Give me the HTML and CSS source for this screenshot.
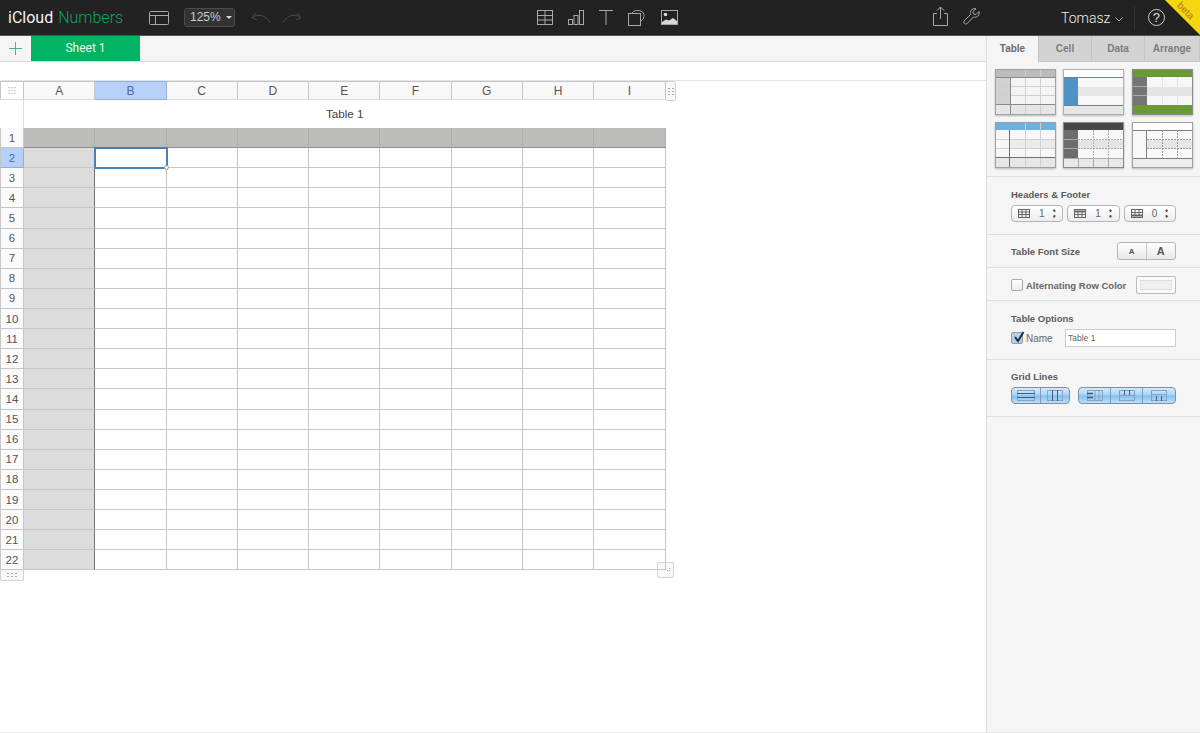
FILE: index.html
```html
<!DOCTYPE html>
<html>
<head>
	<title>iCloud Numbers</title>
	<link rel="stylesheet" href="styles.css">
</head>
<body>
	<div class="topbar">
		<div class="logo">iCloud <span class="logo-app">Numbers</span></div>
		<svg class="ico ico-layout" width="20" height="16" viewBox="0 0 20 16"><rect x="0.5" y="1.5" width="19" height="13" rx="1"/><path d="M0.5 5.5H19.5M6.5 5.5V14.5"/></svg>
		<div class="zoom-btn">125% <span class="caret"></span></div>
		<svg class="ico ico-dim ico-undo" width="20" height="12" viewBox="0 0 20 12"><path d="M5 1L1 5.5L6 8M1.5 5.5C6 2 14 2 19 10.5"/></svg>
		<svg class="ico ico-dim ico-redo" width="20" height="12" viewBox="0 0 20 12"><path d="M15 1L19 5.5L14 8M18.5 5.5C14 2 6 2 1 10.5"/></svg>

		<svg class="ico ico-table" width="16" height="15" viewBox="0 0 16 15"><rect x="0.5" y="0.5" width="15" height="14"/><path d="M0.5 5.5H15.5M0.5 10H15.5M8 0.5V14.5"/></svg>
		<svg class="ico ico-chart" width="16" height="15" viewBox="0 0 16 15"><rect x="0.5" y="9.5" width="4" height="5"/><rect x="6" y="5.5" width="4" height="9"/><rect x="11.5" y="0.5" width="4" height="14"/></svg>
		<svg class="ico ico-text" width="14" height="15" viewBox="0 0 14 15"><path d="M0 0.5H14M7 0.5V15"/></svg>
		<svg class="ico ico-shape" width="17" height="16" viewBox="0 0 17 16"><rect x="0.5" y="3.5" width="12" height="12"/><path d="M4 3.5C5 0 11 -0.5 14.500 2C17 4.500 16.500 9.500 12.500 11"/></svg>
		<svg class="ico ico-media" width="17" height="15" viewBox="0 0 17 15"><rect x="0.5" y="0.5" width="16" height="14"/><circle cx="4.500" cy="4.500" r="1.800" class="fill"/><path class="fill" d="M1 14V12L5 9.500L8 10.500L12 8L16 11V14Z"/></svg>

		<svg class="ico ico-share" width="15" height="20" viewBox="0 0 15 20"><path d="M4 7.500H0.500V19.500H14.500V7.500H11M7.500 13V1M4 4.500L7.500 1L11 4.500"/></svg>
		<svg class="ico ico-wrench" width="17" height="17" viewBox="0 0 17 17"><path d="M16 3.500L13 6.500L10.500 6L10 3.500L13 0.800C10.500 0 7.500 1.500 7.500 4.500C7.500 5.500 7.800 6.200 7.800 6.200L1 13C0 14.500 2 16.800 3.800 15.800L10.500 9C13.500 10 17 7.500 16 3.500Z"/></svg>

		<div class="user">Tomasz <svg class="ico user-arrow" width="8" height="5" viewBox="0 0 8 5"><path d="M0.500 0.500L4 4L7.500 0.500"/></svg></div>
		<div class="bar-sep"></div>
		<div class="help">?</div>
		<div class="beta"><span>beta</span></div>
	</div>

	<div class="main">
		<div class="canvas">
			<div class="sheet-tabs">
				<div class="add-sheet">
					<svg width="13" height="13" viewBox="0 0 13 13"><path d="M6.500 0V13M0 6.500H13"/></svg>
				</div>
				<div class="sheet-tab">Sheet 1</div>
			</div>
			<div class="canvas-gap"></div>

			<div class="table-wrap">
				<table class="grid">
					<colgroup><col class="col-num"><col class="col-c"><col class="col-c"><col class="col-c"><col class="col-c"><col class="col-c"><col class="col-c"><col class="col-c"><col class="col-c"><col class="col-c"></colgroup>
					<tr class="letters"><th class="corner"></th><th>A</th><th class="on">B</th><th>C</th><th>D</th><th>E</th><th>F</th><th>G</th><th>H</th><th>I</th></tr>
					<tr class="title-row"><td class="blank"></td><td colspan="9" class="title">Table 1</td></tr>
					<tr class="head"><th>1</th><td></td><td></td><td></td><td></td><td></td><td></td><td></td><td></td><td></td></tr>
					<tr><th class="on">2</th><td class="a"></td><td class="selected"><span class="sel-handle"></span></td><td></td><td></td><td></td><td></td><td></td><td></td><td></td></tr>
					<tr><th>3</th><td class="a"></td><td></td><td></td><td></td><td></td><td></td><td></td><td></td><td></td></tr>
					<tr><th>4</th><td class="a"></td><td></td><td></td><td></td><td></td><td></td><td></td><td></td><td></td></tr>
					<tr><th>5</th><td class="a"></td><td></td><td></td><td></td><td></td><td></td><td></td><td></td><td></td></tr>
					<tr><th>6</th><td class="a"></td><td></td><td></td><td></td><td></td><td></td><td></td><td></td><td></td></tr>
					<tr><th>7</th><td class="a"></td><td></td><td></td><td></td><td></td><td></td><td></td><td></td><td></td></tr>
					<tr><th>8</th><td class="a"></td><td></td><td></td><td></td><td></td><td></td><td></td><td></td><td></td></tr>
					<tr><th>9</th><td class="a"></td><td></td><td></td><td></td><td></td><td></td><td></td><td></td><td></td></tr>
					<tr><th>10</th><td class="a"></td><td></td><td></td><td></td><td></td><td></td><td></td><td></td><td></td></tr>
					<tr><th>11</th><td class="a"></td><td></td><td></td><td></td><td></td><td></td><td></td><td></td><td></td></tr>
					<tr><th>12</th><td class="a"></td><td></td><td></td><td></td><td></td><td></td><td></td><td></td><td></td></tr>
					<tr><th>13</th><td class="a"></td><td></td><td></td><td></td><td></td><td></td><td></td><td></td><td></td></tr>
					<tr><th>14</th><td class="a"></td><td></td><td></td><td></td><td></td><td></td><td></td><td></td><td></td></tr>
					<tr><th>15</th><td class="a"></td><td></td><td></td><td></td><td></td><td></td><td></td><td></td><td></td></tr>
					<tr><th>16</th><td class="a"></td><td></td><td></td><td></td><td></td><td></td><td></td><td></td><td></td></tr>
					<tr><th>17</th><td class="a"></td><td></td><td></td><td></td><td></td><td></td><td></td><td></td><td></td></tr>
					<tr><th>18</th><td class="a"></td><td></td><td></td><td></td><td></td><td></td><td></td><td></td><td></td></tr>
					<tr><th>19</th><td class="a"></td><td></td><td></td><td></td><td></td><td></td><td></td><td></td><td></td></tr>
					<tr><th>20</th><td class="a"></td><td></td><td></td><td></td><td></td><td></td><td></td><td></td><td></td></tr>
					<tr><th>21</th><td class="a"></td><td></td><td></td><td></td><td></td><td></td><td></td><td></td><td></td></tr>
					<tr><th>22</th><td class="a"></td><td></td><td></td><td></td><td></td><td></td><td></td><td></td><td></td></tr>
				</table>
				<div class="handle handle-right"><i></i><i></i><i></i><i></i><i></i><i></i></div>
				<div class="handle handle-bottom"><i></i><i></i><i></i><i></i><i></i><i></i></div>
				<div class="handle-resize"></div>
			</div>
		</div>

		<div class="inspector">
			<div class="insp-tabs">
				<div class="insp-tab active">Table</div>
				<div class="insp-tab">Cell</div>
				<div class="insp-tab">Data</div>
				<div class="insp-tab">Arrange</div>
			</div>

			<div class="thumbs">
				<svg class="thumb" viewBox="0 0 61 46"><rect width="61" height="46" fill="#f4f4f4"/><rect y="35" width="61" height="11" fill="#e6e6e6"/><rect width="61" height="8" fill="#bcbcbc"/><rect y="8" width="15" height="27" fill="#d2d2d2"/><path d="M0 17.500H61M0 26.500H61M30.500 0V46M45.500 0V46" stroke="#cfcfcf"/><path d="M15.500 8V46M0 8.500H61M0 35.500H61" stroke="#8a8a8a"/><rect x="0.500" y="0.500" width="60" height="45" fill="none" stroke="#a0a0a0"/></svg>
				<svg class="thumb" viewBox="0 0 61 46"><rect width="61" height="46" fill="#f8f8f8"/><rect width="61" height="8" fill="#fff"/><rect y="36" width="61" height="10" fill="#e6e6e6"/><rect x="15" y="18" width="46" height="9" fill="#e6e6e6"/><rect y="8" width="15" height="28" fill="#4f93c6"/><path d="M0 8.500H61M0 36.500H61" stroke="#6b8199"/><rect x="0.500" y="0.500" width="60" height="45" fill="none" stroke="#b0b0b0"/></svg>
				<svg class="thumb" viewBox="0 0 61 46"><rect width="61" height="46" fill="#f6f6f6"/><rect y="18" width="61" height="9" fill="#e4e4e4"/><rect x="1" y="1" width="59" height="7" fill="#6a9a35"/><rect x="1" y="36" width="59" height="9" fill="#6a9a35"/><rect x="1" y="8" width="14" height="28" fill="#757575"/><path d="M1 17.500H15M1 26.500H15" stroke="#aaa"/><path d="M30.500 8V36M45.500 8V36" stroke="#e2e2e2"/><rect x="0.500" y="0.500" width="60" height="45" fill="none" stroke="#8a8a8a"/></svg>
				<svg class="thumb" viewBox="0 0 61 46"><rect width="61" height="46" fill="#f7f7f7"/><rect y="35" width="61" height="11" fill="#e6e6e6"/><rect x="15" y="18" width="46" height="9" fill="#ececec"/><rect width="61" height="8" fill="#6cb0e2"/><path d="M0 17.500H61M0 26.500H61M30.500 0V46M45.500 0V46" stroke="#cfcfcf"/><path d="M14.500 8V46M0 35.500H61" stroke="#707070"/><rect x="0.500" y="0.500" width="60" height="45" fill="none" stroke="#a0a0a0"/></svg>
				<svg class="thumb" viewBox="0 0 61 46"><rect width="61" height="46" fill="#f7f7f7"/><rect y="36" width="61" height="10" fill="#e8e8e8"/><rect y="18" width="61" height="9" fill="#e4e4e4"/><rect width="61" height="8" fill="#474747"/><rect y="8" width="15" height="28" fill="#6c6c6c"/><path d="M0 17.500H15M0 26.500H15M0 36.500H61M15.500 36V46M30.500 36V46M45.500 36V46" stroke="#aaa"/><path d="M15 17.500H61M15 26.500H61M30.500 8V36M45.500 8V36" stroke="#aaa" stroke-dasharray="2 1"/><rect x="0.500" y="0.500" width="60" height="45" fill="none" stroke="#8a8a8a"/></svg>
				<svg class="thumb" viewBox="0 0 61 46"><rect width="61" height="46" fill="#f8f8f8"/><rect y="36" width="61" height="10" fill="#ececec"/><rect y="18" x="15" width="46" height="9" fill="#e6e6e6"/><rect width="61" height="8" fill="#fff"/><path d="M0 8.500H61M0 36.500H61M14.500 8V36" stroke="#808080"/><path d="M15 17.500H61M15 26.500H61M30.500 8V36M45.500 8V36" stroke="#999" stroke-dasharray="2 1"/><rect x="0.500" y="0.500" width="60" height="45" fill="none" stroke="#a0a0a0"/></svg>
			</div>

			<div class="section sec-headers">
				<div class="label">Headers &amp; Footer</div>
				<div class="steppers">
					<div class="stepper">
						<svg class="mini" width="12" height="9" viewBox="0 0 12 9"><rect x="0.500" y="0.500" width="11" height="8"/><path d="M0.500 3H11.500M0.500 5.500H11.500M4 0.500V8.500M8 0.500V8.500"/></svg>
						<span class="num">1</span><span class="arrows"></span>
					</div>
					<div class="stepper">
						<svg class="mini" width="12" height="9" viewBox="0 0 12 9"><rect x="0.500" y="0.500" width="11" height="8"/><path d="M0.500 2.500H11.500" stroke-width="2"/><path d="M0.500 5.500H11.500M4 2.500V8.500M8 2.500V8.500"/></svg>
						<span class="num">1</span><span class="arrows"></span>
					</div>
					<div class="stepper">
						<svg class="mini" width="12" height="9" viewBox="0 0 12 9"><rect x="0.500" y="0.500" width="11" height="8"/><path d="M0.500 6.500H11.500" stroke-width="2"/><path d="M0.500 3.500H11.500M4 0.500V6.500M8 0.500V6.500"/></svg>
						<span class="num">0</span><span class="arrows"></span>
					</div>
				</div>
			</div>

			<div class="section sec-font">
				<div class="label">Table Font Size</div>
				<div class="seg-font">
					<div class="small-a">A</div>
					<div class="big-a">A</div>
				</div>
			</div>

			<div class="section sec-alt">
				<div class="check"></div>
				<div class="label alt-label">Alternating Row Color</div>
				<div class="swatch"><div></div></div>
			</div>

			<div class="section sec-options">
				<div class="label">Table Options</div>
				<div class="name-row">
					<div class="check checked">
						<svg width="13" height="13" viewBox="0 0 13 13"><path d="M3 6L6 10L11.500 1"/></svg>
					</div>
					<span class="name-label">Name</span>
					<div class="name-input">Table 1</div>
				</div>
			</div>

			<div class="section sec-lines">
				<div class="label">Grid Lines</div>
				<div class="line-groups">
					<div class="line-seg seg-2">
						<div><svg class="mini dark" width="18" height="11" viewBox="0 0 18 11"><rect class="soft" x="0.500" y="0.500" width="17" height="10"/><path d="M0 3.500H18M0 7.500H18"/></svg></div>
						<div><svg class="mini dark" width="16" height="11" viewBox="0 0 16 11"><rect class="soft" x="0.500" y="0.500" width="15" height="10"/><path d="M5.500 0V11M10.500 0V11"/></svg></div>
					</div>
					<div class="line-seg seg-3">
						<div><svg class="mini dark" width="16" height="11" viewBox="0 0 16 11"><rect class="soft" x="0.500" y="0.500" width="15" height="10"/><path class="soft" d="M8 0V11M12 0V11"/><path d="M0 3.500H6M0 7.500H6" stroke-width="1.500"/></svg></div>
						<div><svg class="mini dark" width="16" height="11" viewBox="0 0 16 11"><rect class="soft" x="0.500" y="0.500" width="15" height="10"/><path class="soft" d="M0 5.500H16"/><path d="M5.500 0V5M10.500 0V5"/></svg></div>
						<div><svg class="mini dark" width="16" height="11" viewBox="0 0 16 11"><rect class="soft" x="0.500" y="0.500" width="15" height="10"/><path class="soft" d="M0 4.500H16"/><path d="M5.500 6V11M10.500 6V11"/></svg></div>
					</div>
				</div>
			</div>
		</div>
	</div>
</body>
</html>
```

FILE: styles.css
```css
* {
	box-sizing: border-box;
}

html, body {
	height: 100%;
}

body {
	margin: 0;
	display: flex;
	flex-direction: column;
	overflow: hidden;
	background: #fff;
	font-family: "Liberation Sans", Arial, sans-serif;
	color: #555;
}

/* top bar */
.topbar {
	position: relative;
	flex: none;
	height: 36px;
	display: flex;
	align-items: center;
	background: #222;
	border-bottom: 1px solid #555;
}

.logo {
	width: 149px;
	padding-left: 8px;
	font-family: Roboto, "Liberation Sans", sans-serif;
	font-size: 16px;
	font-weight: 400;
	color: #f2f2f2;
	white-space: nowrap;
}

.logo-app {
	margin-left: 1px;
	font-weight: 300;
	color: #0fa35f;
}

.ico {
	flex: none;
	fill: none;
	stroke: #a8a8a8;
	stroke-width: 1;
}

.ico .fill {
	fill: #d8d8d8;
	stroke: none;
}

.ico-dim {
	stroke: #4c4c4c;
}

.ico-undo { margin-left: 16px; }
.ico-redo { margin-left: 11px; }
.ico-table { margin-left: 235px; }
.ico-chart { margin-left: 15px; }
.ico-text { margin-left: 15px; }
.ico-shape { margin-left: 15px; }
.ico-media { margin-left: 16px; }
.ico-share { margin-left: 255px; margin-top: -4px; }
.ico-wrench { margin-left: 15px; margin-top: -2px; }

.zoom-btn {
	flex: none;
	width: 51px;
	height: 19px;
	margin-left: 15px;
	padding-left: 5px;
	background: #333;
	border: 1px solid #4b4b4b;
	border-radius: 3px;
	font-size: 12px;
	line-height: 17px;
	color: #c9c9c9;
}

.caret {
	display: inline-block;
	margin-left: 2px;
	vertical-align: 2px;
	border-top: 3px solid #ddd;
	border-left: 3px solid transparent;
	border-right: 3px solid transparent;
}

.user {
	flex: none;
	margin-left: 81px;
	font-family: Roboto, "Liberation Sans", sans-serif;
	font-size: 14px;
	font-weight: 300;
	color: #eee;
	white-space: nowrap;
}

.user-arrow {
	margin-left: 1px;
	vertical-align: 1px;
}

.bar-sep {
	flex: none;
	width: 1px;
	height: 24px;
	margin-left: 11px;
	background: #333;
}

.help {
	flex: none;
	width: 17px;
	height: 17px;
	margin-left: 13px;
	border: 1px solid #ccc;
	border-radius: 50%;
	font-size: 13px;
	line-height: 15px;
	text-align: center;
	color: #ddd;
}

.beta {
	position: absolute;
	top: 0;
	right: 0;
	width: 35px;
	height: 35px;
	background: #f6d40e;
	clip-path: polygon(0 0, 100% 0, 100% 100%);
}

.beta span {
	position: absolute;
	top: 5px;
	left: 11px;
	font-size: 10px;
	color: #b0791a;
	transform: rotate(45deg);
}

/* main area */
.main {
	flex: 1;
	min-height: 0;
	display: flex;
	border-bottom: 1px solid #e8e8e8;
}

.canvas {
	position: relative;
	flex: none;
	width: 986px;
}

.sheet-tabs {
	height: 26px;
	display: flex;
	background: #f5f5f5;
	border-bottom: 1px solid #ddd;
}

.add-sheet {
	width: 31px;
	display: flex;
	align-items: center;
	justify-content: center;
}

.add-sheet svg {
	stroke: #3dba80;
	fill: none;
}

.sheet-tab {
	width: 109px;
	height: 25px;
	background: #00b464;
	font-family: Roboto, "Liberation Sans", sans-serif;
	font-size: 12px;
	line-height: 25px;
	text-align: center;
	color: #e8f8ef;
}

.canvas-gap {
	height: 19px;
	border-bottom: 1px solid #e4e4e4;
}

/* table */
.table-wrap {
	position: relative;
	width: 680px;
}

.grid {
	border-collapse: separate;
	border-spacing: 0;
	table-layout: fixed;
	width: 665.52px;
	font-size: 12px;
}

.col-num {
	width: 24px;
}

.col-c {
	width: 71.28px;
}

.grid th, .grid td {
	height: 20.11px;
	padding: 0;
	border-right: 1px solid #c6c6c6;
	border-bottom: 1px solid #c6c6c6;
}

.grid th {
	font-weight: 400;
	color: #555;
	background: #fafafa;
}

.grid tr th:first-child {
	border-left: 1px solid #c6c6c6;
	font-size: 11.500px;
}

.grid .letters th {
	height: 19px;
	padding-top: 1px;
	background: #f8f8f8;
	border-top: 1px solid #c6c6c6;
	border-bottom-color: #ddd;
}

.grid .letters th.on {
	background: #b6d0fa;
	color: #4d6a9c;
	border-color: #8fb1e0;
}

.grid th.on {
	background: #b6d0fa;
	color: #4d6a9c;
	border-color: #8fb1e0;
}

.title-row td {
	height: 28px;
	border-right: 0;
	border-bottom: 0;
}

.grid .title-row .title {
	padding-bottom: 1px;
	font-size: 11.700px;
	text-align: center;
	color: #444;
}

.grid .title-row .blank {
	border-left: 0;
	border-right: 1px solid #ddd;
}

.title-row .title {
	border-right: 0;
}

.head td {
	background: #bcbdbb;
	border-right-color: #adadad;
	border-top: 0;
	border-bottom-color: #8e8e8e;
}

.grid td.a {
	background: #dcdcdc;
	border-right-color: #737373;
}

.grid td.selected {
	position: relative;
	outline: 2px solid #4a80b8;
	outline-offset: -1px;
}

.sel-handle {
	position: absolute;
	right: -3px;
	bottom: -3px;
	width: 5px;
	height: 5px;
	background: #fff;
	border: 1px solid #999;
	border-radius: 50%;
}

/* drag handles round the table */
.grid th.corner {
	background: #f8f8f8;
	background-image: radial-gradient(#aaa 0.6px, transparent 0.8px);
	background-size: 3px 3px;
	background-position: center;
	background-repeat: repeat;
	background-clip: content-box;
	padding: 5px 7px;
}

.handle {
	position: absolute;
	display: grid;
	gap: 2px;
	background: #f8f8f8;
	border: 1px solid #d0d0d0;
}

.handle i {
	width: 2px;
	height: 1px;
	background: #aaa;
}

.handle-right {
	top: 0;
	left: 666px;
	width: 10px;
	height: 20px;
	grid-template-columns: 2px 2px;
	justify-content: center;
	align-content: center;
	border-left: 0;
	border-radius: 0 2px 2px 0;
}

.handle-bottom {
	top: 489px;
	left: 0;
	width: 24px;
	height: 11px;
	grid-template-columns: repeat(3, 2px);
	justify-content: center;
	align-content: center;
	border-top: 0;
	border-radius: 0 0 2px 2px;
}

.handle-resize {
	position: absolute;
	top: 481px;
	left: 657px;
	width: 17px;
	height: 16px;
	z-index: -1;
	background: #f8f8f8;
	border: 1px solid #d4d4d4;
	border-radius: 2px;
}

.handle-resize::after {
	content: "";
	position: absolute;
	top: 7px;
	left: 9px;
	width: 1px;
	height: 1px;
	background: #aaa;
	box-shadow: 2px 0 #aaa, 2px -2px #aaa, 0 2px #fff;
}

/* right panel */
.inspector {
	flex: none;
	width: 214px;
	background: #f5f5f5;
	border-left: 1px solid #ddd;
}

.insp-tabs {
	height: 26px;
	display: grid;
	grid-template-columns: 52px 53px 53px 55px;
}

.insp-tab {
	background: #d3d3d3;
	border-right: 1px solid #c4c4c4;
	border-bottom: 1px solid #c8c8c8;
	font-size: 10px;
	font-weight: 700;
	line-height: 25px;
	text-align: center;
	color: #7c7c7c;
}

.insp-tab.active {
	background: #f5f5f5;
	border-bottom: 0;
	color: #6a6a6a;
}

.thumbs {
	display: grid;
	grid-template-columns: 61px 62px 61px;
	grid-auto-rows: 46px;
	column-gap: 7px;
	row-gap: 7px;
	height: 115px;
	padding: 7px 0 0 8px;
	border-bottom: 1px solid #ddd;
}

.thumb {
	display: block;
	width: 61px;
	height: 46px;
	box-shadow: 0 1px 2px rgba(0, 0, 0, 0.25);
}

.section {
	padding-left: 24px;
	padding-right: 24px;
	border-bottom: 1px solid #ddd;
}

.label {
	font-size: 9.500px;
	font-weight: 700;
	color: #5c5c5c;
	white-space: nowrap;
}

.sec-headers {
	height: 58px;
	padding-top: 12px;
}

.steppers {
	display: flex;
	gap: 4px;
	margin-top: 5px;
}

.stepper {
	position: relative;
	width: 52.500px;
	height: 17px;
	display: flex;
	align-items: center;
	padding-left: 6px;
	background: linear-gradient(#fff, #ececec);
	border: 1px solid #b5b5b5;
	border-radius: 4px;
	font-size: 10px;
	color: #666;
}

.mini {
	flex: none;
	fill: none;
	stroke: #666;
}

.num {
	margin-left: 9px;
}

.arrows {
	margin-left: 7px;
	width: 5px;
	height: 9px;
	border-top: 3px solid #555;
	border-bottom: 3px solid #555;
	border-left: 2px solid transparent;
	border-right: 2px solid transparent;
	clip-path: polygon(50% 0, 100% 30%, 100% 70%, 50% 100%, 0 70%, 0 30%);
}

.sec-font {
	height: 33px;
	display: flex;
	align-items: center;
	justify-content: space-between;
}

.seg-font {
	width: 59px;
	height: 18px;
	display: grid;
	grid-template-columns: 1fr 1fr;
	background: linear-gradient(#fff, #e8e8e8);
	border: 1px solid #b5b5b5;
	border-radius: 3px;
	font-weight: 700;
	line-height: 16px;
	text-align: center;
	color: #555;
}

.small-a {
	font-size: 8px;
	line-height: 18px;
	border-right: 1px solid #c4c4c4;
}

.big-a {
	font-size: 11px;
}

.sec-alt {
	height: 33px;
	padding-top: 2px;
	display: flex;
	align-items: center;
}

.check {
	flex: none;
	width: 12px;
	height: 12px;
	background: linear-gradient(#fff, #ececec);
	border: 1px solid #aaa;
	border-radius: 2px;
}

.alt-label {
	margin-left: 3px;
	color: #666;
}

.swatch {
	flex: none;
	width: 40px;
	height: 18px;
	margin-left: auto;
	padding: 3px;
	background: #fafafa;
	border: 1px solid #bbb;
	border-radius: 2px;
}

.swatch div {
	height: 100%;
	background: #f0f0f0;
	border: 1px solid #ddd;
}

.sec-options {
	height: 59px;
	padding-top: 12px;
}

.name-row {
	display: flex;
	align-items: center;
	margin-top: 5px;
}

.check.checked {
	position: relative;
	background: #b9cfe8;
	border-color: #8a9cb4;
}

.check.checked svg {
	position: absolute;
	top: -2px;
	left: 0;
	fill: none;
	stroke: #1d2d44;
	stroke-width: 2;
}

.name-label {
	margin-left: 3px;
	font-size: 10px;
	color: #666;
}

.name-input {
	width: 111px;
	height: 18px;
	margin-left: auto;
	padding-left: 2px;
	background: #fff;
	border: 1px solid #ccc;
	font-size: 8.500px;
	line-height: 16px;
	color: #666;
}

.sec-lines {
	height: 57px;
	padding-top: 11px;
}

.line-groups {
	display: flex;
	gap: 8px;
	margin-top: 5px;
}

.line-seg {
	height: 17px;
	display: grid;
	border: 1px solid #7d8fa6;
	border-radius: 4px;
	background: linear-gradient(#d4e9fc 0%, #b0d8f8 40%, #86c2f2 55%, #bcdffb 100%);
}

.seg-2 {
	width: 59px;
	grid-template-columns: 1fr 1fr;
}

.seg-3 {
	width: 98px;
	grid-template-columns: 1fr 1fr 1fr;
}

.line-seg > div {
	display: flex;
	align-items: center;
	justify-content: center;
	border-right: 1px solid #7f9ab8;
}

.line-seg > div:last-child {
	border-right: 0;
}

.mini.dark {
	stroke: #4a5a72;
}

.mini .soft {
	stroke: #8aa2be;
}
```
